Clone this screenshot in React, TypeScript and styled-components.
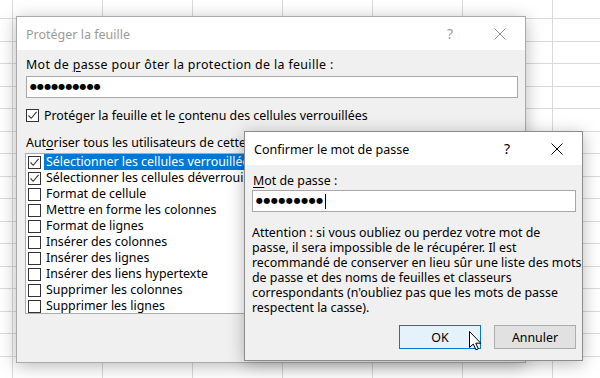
import React from 'react';
import styled, { createGlobalStyle } from 'styled-components';

const GlobalStyle = createGlobalStyle`
  html, body {
    margin: 0;
    padding: 0;
  }
  body {
    font-family: "Noto Sans", "Open Sans", "DejaVu Sans", sans-serif;
    font-size: 12.4px;
    color: #000;
  }
`;

// sheet of cells behind the dialogs
const Sheet = styled.div`
  position: relative;
  width: 600px;
  height: 378px;
  overflow: hidden;
  background-color: #fff;
  background-image:
    linear-gradient(to right, #d9d9d9 0 1px, transparent 1px 100%),
    linear-gradient(to bottom, #d9d9d9 0 1px, transparent 1px 23px, #d9d9d9 23px 24px, transparent 24px 100%);
  background-size: 90px 100%, 100% 45px;
  background-position: 12px 0, 0 18px;
`;

const Window = styled.div<{ $left: number; $top: number; $width: number; $height: number; $active?: boolean }>`
  position: absolute;
  left: ${(p) => p.$left}px;
  top: ${(p) => p.$top}px;
  width: ${(p) => p.$width}px;
  height: ${(p) => p.$height}px;
  box-sizing: border-box;
  display: flex;
  flex-direction: column;
  border: 1px solid ${(p) => (p.$active ? '#8c8c8c' : '#a9a9a9')};
  box-shadow: 0 3px 16px rgba(0, 0, 0, 0.28);
  background: #f0f0f0;
  z-index: ${(p) => (p.$active ? 2 : 1)};
`;

const TitleBar = styled.div`
  height: 33px;
  display: flex;
  align-items: center;
  background: #fff;
  flex-shrink: 0;
`;

const Title = styled.div<{ $active?: boolean }>`
  flex: 1;
  padding-left: 9px;
  padding-top: 1px;
  font-size: 12.5px;
  color: ${(p) => (p.$active ? '#000' : '#9a9a9a')};
  white-space: nowrap;
`;

const CaptionButton = styled.div<{ $active?: boolean }>`
  width: 50px;
  height: 33px;
  display: flex;
  align-items: center;
  justify-content: center;
  font-size: 14px;
  color: ${(p) => (p.$active ? '#000' : '#9a9a9a')};
`;

const Body = styled.div<{ $pad: string }>`
  flex: 1;
  display: flex;
  flex-direction: column;
  padding: ${(p) => p.$pad};
  min-height: 0;
`;

const Label = styled.div<{ $gap?: number; $indent?: number; $track?: number }>`
  line-height: 16px;
  height: 16px;
  margin-top: ${(p) => p.$gap ?? 0}px;
  padding-left: ${(p) => p.$indent ?? 0}px;
  letter-spacing: ${(p) => p.$track ?? 0}px;
  white-space: nowrap;
`;

const Key = styled.u`
  text-underline-offset: 2px;
`;

const TextBox = styled.div<{ $gap?: number }>`
  height: 22px;
  box-sizing: border-box;
  margin-top: ${(p) => p.$gap ?? 0}px;
  background: #fff;
  border: 1px solid #a8a8a8;
  display: flex;
  align-items: center;
  padding-left: 3px;
`;

const Dots = styled.span<{ $pitch?: number }>`
  font-family: "DejaVu Sans", sans-serif;
  font-size: 8px;
  letter-spacing: ${(p) => p.$pitch ?? 0.1}px;
  line-height: 1;
  color: #000;
`;

const Caret = styled.span`
  width: 1px;
  height: 15px;
  margin-left: 1px;
  background: #000;
`;

const CheckRow = styled.div<{ $gap?: number }>`
  display: flex;
  align-items: center;
  height: 16px;
  margin-top: ${(p) => p.$gap ?? 0}px;
  white-space: nowrap;
`;

const Box = styled.span`
  width: 13px;
  height: 13px;
  box-sizing: border-box;
  border: 1px solid #333;
  background: #fff;
  flex-shrink: 0;
  display: flex;
  align-items: center;
  justify-content: center;
`;

const CheckText = styled.span`
  margin-left: 5px;
`;

const ListBox = styled.div`
  margin-top: 2px;
  margin-left: -1px;
  height: 161px;
  box-sizing: border-box;
  background: #fff;
  border: 1px solid #adadad;
  display: flex;
  flex-direction: column;
`;

const ListItem = styled.div`
  display: flex;
  align-items: center;
  height: 16px;
  padding-left: 2px;
  white-space: nowrap;
`;

const ItemText = styled.span<{ $selected?: boolean }>`
  flex: 1;
  margin-left: 3px;
  padding-left: 2px;
  line-height: 16px;
  background: ${(p) => (p.$selected ? '#0078d7' : 'transparent')};
  color: ${(p) => (p.$selected ? '#fff' : '#000')};
`;

const Note = styled.p`
  margin: 13px 0 0;
  line-height: 15px;
  white-space: nowrap;
`;

const ButtonRow = styled.div`
  display: flex;
  justify-content: flex-end;
  gap: 13px;
  margin-top: 10px;
`;

const Button = styled.div<{ $default?: boolean }>`
  width: 82px;
  height: 24px;
  box-sizing: border-box;
  display: flex;
  align-items: center;
  justify-content: center;
  background: ${(p) => (p.$default ? '#e5f1fb' : '#e1e1e1')};
  border: 1px solid ${(p) => (p.$default ? '#0078d7' : '#adadad')};
`;

const Pointer = styled.svg`
  position: absolute;
  left: 469px;
  top: 331px;
  z-index: 5;
`;

const CloseIcon = ({ active }: { active?: boolean }) => (
  <svg width="12" height="12" viewBox="0 0 12 12">
    <path d="M0.5 0.5 L11.5 11.5 M11.5 0.5 L0.5 11.5" stroke={active ? '#000' : '#8e8e8e'} strokeWidth="1" fill="none" />
  </svg>
);

const Tick = () => (
  <svg width="11" height="11" viewBox="0 0 11 11">
    <path d="M1.5 5.5 L4.2 8.3 L9.6 1.8" stroke="#333" strokeWidth="1.1" fill="none" />
  </svg>
);

const permissions = [
  { label: 'Sélectionner les cellules verrouillées', checked: true, selected: true },
  { label: 'Sélectionner les cellules déverrouillées', checked: true },
  { label: 'Format de cellule' },
  { label: 'Mettre en forme les colonnes' },
  { label: 'Format de lignes' },
  { label: 'Insérer des colonnes' },
  { label: 'Insérer des lignes' },
  { label: 'Insérer des liens hypertexte' },
  { label: 'Supprimer les colonnes' },
  { label: 'Supprimer les lignes' },
];

const noteLines = [
  'Attention : si vous oubliez ou perdez votre mot de',
  'passe, il sera impossible de le récupérer. Il est',
  'recommandé de conserver en lieu sûr une liste des mots',
  'de passe et des noms de feuilles et classeurs',
  "correspondants (n'oubliez pas que les mots de passe",
  'respectent la casse).',
];

export default function App() {
  return (
    <>
      <GlobalStyle />
      <Sheet>
        <Window $left={16} $top={16} $width={510} $height={347}>
          <TitleBar>
            <Title>Protéger la feuille</Title>
            <CaptionButton>?</CaptionButton>
            <CaptionButton>
              <CloseIcon />
            </CaptionButton>
          </TitleBar>
          <Body $pad="7px 7px 0 9px">
            <Label $track={0.35}>
              Mot de <Key>p</Key>asse pour ôter la protection de la feuille :
            </Label>
            <TextBox $gap={3}>
              <Dots>●●●●●●●●●●</Dots>
            </TextBox>
            <CheckRow $gap={9}>
              <Box>
                <Tick />
              </Box>
              <CheckText>
                Protéger la feuille et le <Key>c</Key>ontenu des cellules verrouillées
              </CheckText>
            </CheckRow>
            <Label $gap={12}>
              Aut<Key>o</Key>riser tous les utilisateurs de cette feuille à :
            </Label>
            <ListBox>
              {permissions.map((item) => (
                <ListItem key={item.label}>
                  <Box>{item.checked && <Tick />}</Box>
                  <ItemText $selected={item.selected}>{item.label}</ItemText>
                </ListItem>
              ))}
            </ListBox>
          </Body>
        </Window>

        <Window $left={244} $top={131} $width={339} $height={230} $active>
          <TitleBar>
            <Title $active>Confirmer le mot de passe</Title>
            <CaptionButton $active>?</CaptionButton>
            <CaptionButton $active>
              <CloseIcon active />
            </CaptionButton>
          </TitleBar>
          <Body $pad="8px 6px 0 7px">
            <Label $indent={1}>
              <Key>M</Key>ot de passe :
            </Label>
            <TextBox $gap={1}>
              <Dots $pitch={0.55}>●●●●●●●●●</Dots>
              <Caret />
            </TextBox>
            <Note>
              {noteLines.map((line, i) => (
                <React.Fragment key={i}>
                  {line}
                  {i < noteLines.length - 1 && <br />}
                </React.Fragment>
              ))}
            </Note>
            <ButtonRow>
              <Button $default>OK</Button>
              <Button>Annuler</Button>
            </ButtonRow>
          </Body>
        </Window>

        <Pointer width="13" height="20" viewBox="0 0 13 20">
          <path
            d="M0.5 0.5 L0.5 16.5 L4.3 13 L6.9 18.8 L9.3 17.8 L6.8 12.2 L11.8 12.2 Z"
            fill="#fff"
            stroke="#000"
            strokeWidth="1"
            strokeLinejoin="round"
          />
        </Pointer>
      </Sheet>
    </>
  );
}
